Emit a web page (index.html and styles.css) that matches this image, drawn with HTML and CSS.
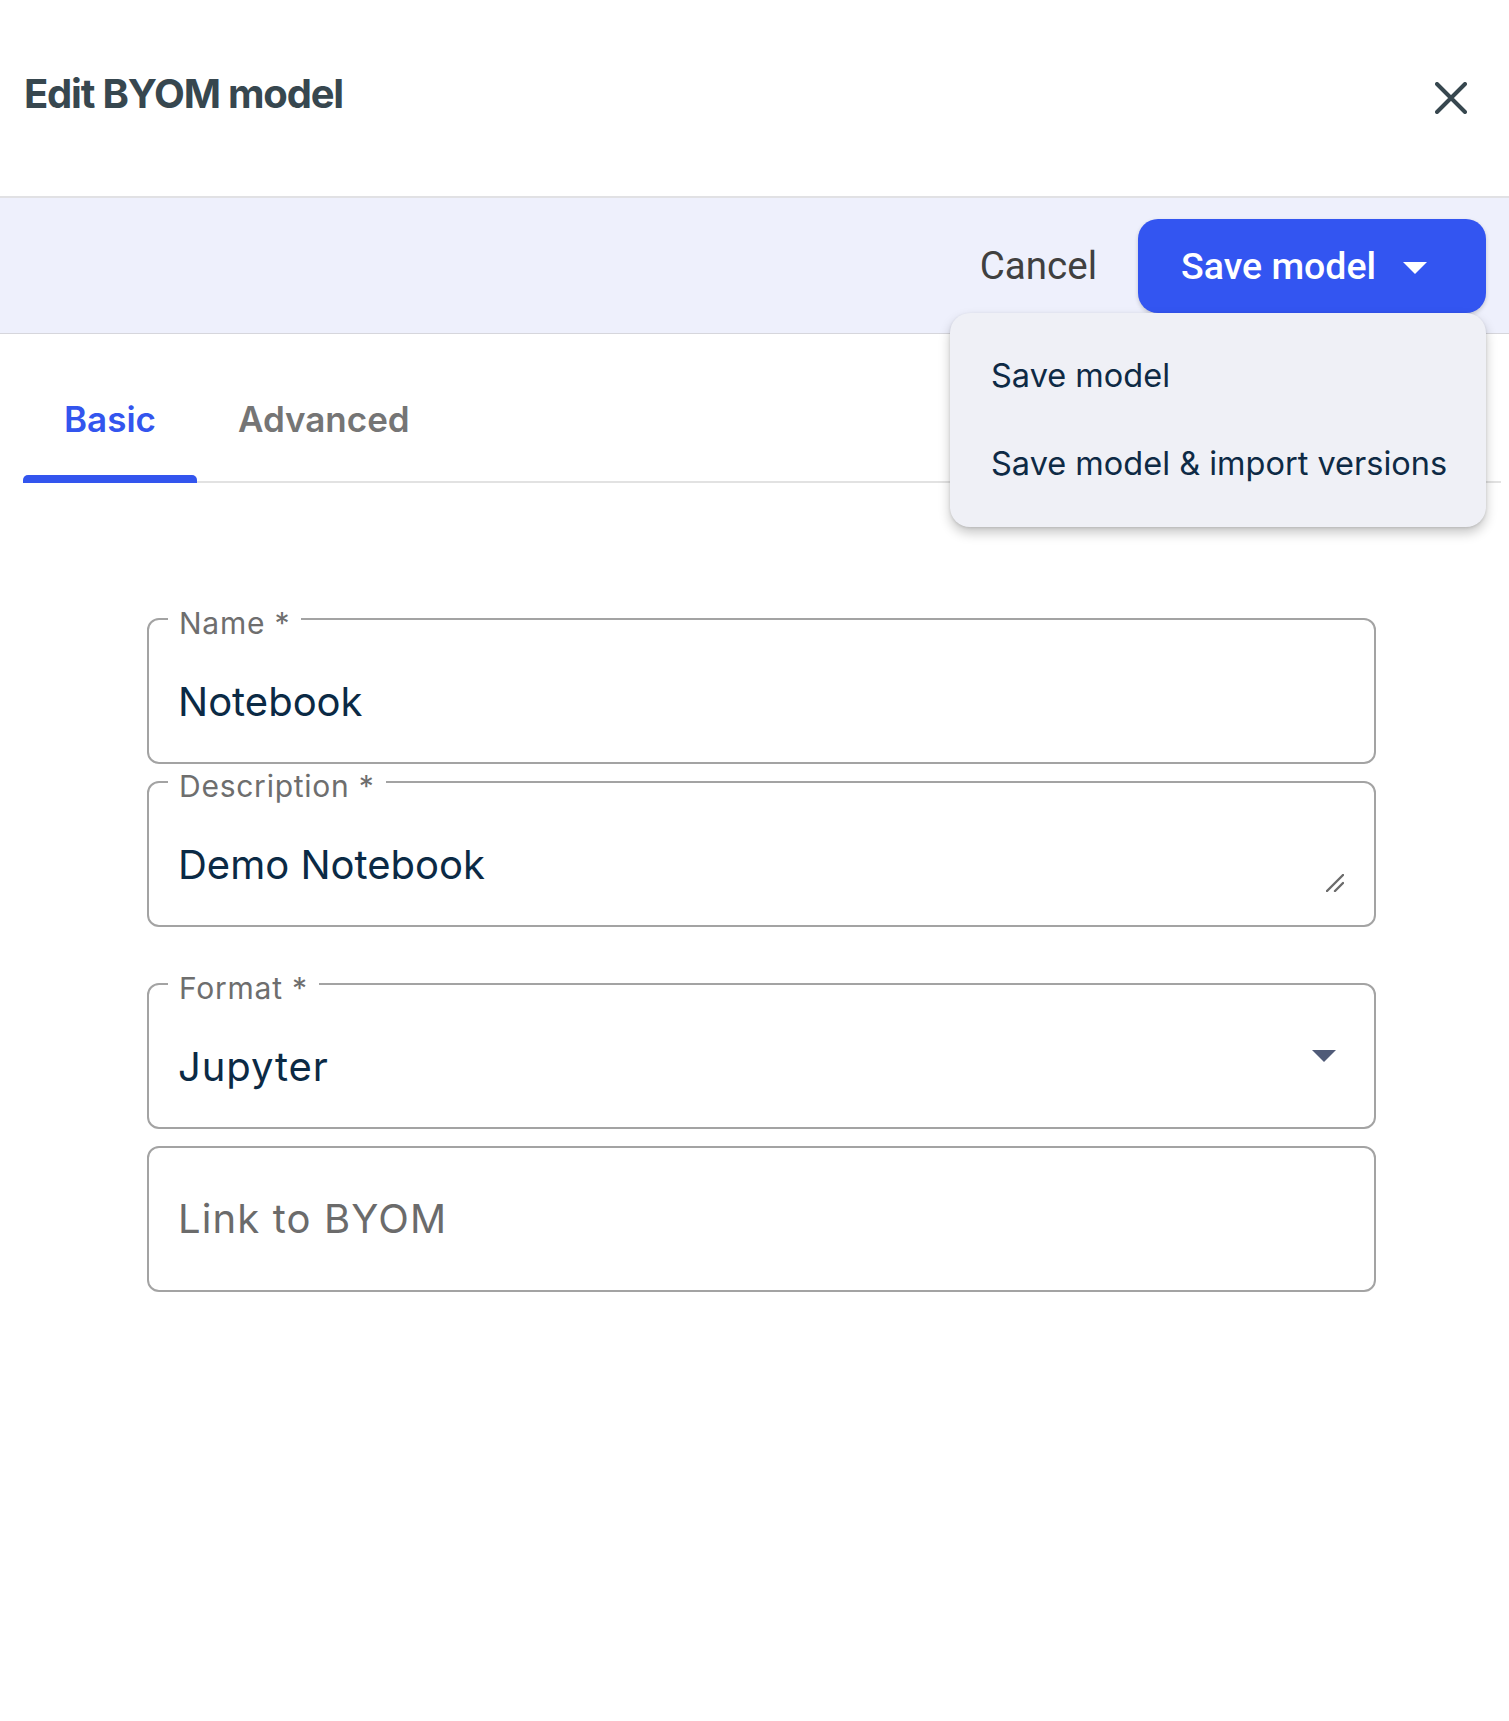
FILE: index.html
```html
<!DOCTYPE html>
<html lang="en">
<head>
<meta charset="utf-8">
<title>Edit BYOM model</title>
<link rel="stylesheet" href="styles.css">
</head>
<body>
<div class="dialog">
  <header class="header">
    <h1 class="title">Edit BYOM model</h1>
    <button class="close" aria-label="Close">
      <svg width="32" height="32" viewBox="0 0 32 32"><path d="M2 2 L30 30 M30 2 L2 30" stroke="#37474f" stroke-width="4" stroke-linecap="round" fill="none"/></svg>
    </button>
  </header>

  <div class="toolbar">
    <button class="cancel">Cancel</button>
    <div class="split">
      <button class="save">
        <span>Save model</span>
        <svg class="save-caret" width="24" height="12" viewBox="0 0 24 12"><path d="M0 0 H24 L12 12 Z" fill="#fff"/></svg>
      </button>
      <ul class="menu">
        <li class="menu-item">Save model</li>
        <li class="menu-item">Save model &amp; import versions</li>
      </ul>
    </div>
  </div>

  <nav class="tabs">
    <div class="tab active">Basic</div>
    <div class="tab">Advanced</div>
  </nav>

  <form class="form">
    <div class="field">
      <span class="field-label">Name *</span>
      <div class="field-value">Notebook</div>
    </div>
    <div class="field field-area">
      <span class="field-label">Description *</span>
      <div class="field-value">Demo Notebook</div>
      <svg class="resize" width="18" height="18" viewBox="0 0 18 18"><path d="M1 17 L17 1 M9 17 L17 9" stroke="#6b6b6b" stroke-width="2.4" stroke-linecap="round" fill="none"/></svg>
    </div>
    <div class="field field-select">
      <span class="field-label">Format *</span>
      <div class="field-value">Jupyter</div>
      <svg class="select-caret" width="24" height="12" viewBox="0 0 24 12"><path d="M0 0 H24 L12 12 Z" fill="#505b78"/></svg>
    </div>
    <div class="field field-plain">
      <div class="field-value placeholder">Link to BYOM</div>
    </div>
  </form>
</div>
</body>
</html>
```

FILE: styles.css
```css
* { box-sizing: border-box; }
html, body { margin: 0; padding: 0; background: #fff; }
body { font-family: Inter, "Noto Sans", sans-serif; width: 1509px; min-height: 1721px; }

.dialog { position: relative; }

.header {
  height: 198px;
  border-bottom: 2px solid #e1e1e4;
  display: flex;
  justify-content: space-between;
  align-items: flex-start;
  padding: 74px 42px 0 24px;
}
.title {
  margin: 0;
  font-size: 40px;
  line-height: 40px;
  font-weight: 700;
  color: #37474f;
  letter-spacing: -0.03em;
}
.close {
  margin-top: 8px;
  padding: 0;
  border: 0;
  background: none;
  width: 32px;
  height: 32px;
  display: block;
}
.close svg { display: block; }

.toolbar {
  height: 136px;
  background: #eef0fc;
  border-bottom: 1px solid #d6d6dc;
  display: flex;
  justify-content: flex-end;
  align-items: center;
  padding-right: 23px;
}
.cancel {
  font-family: Roboto, sans-serif;
  font-size: 38.5px;
  font-weight: 400;
  color: #404040;
  background: none;
  border: 0;
  padding: 0;
  margin-right: 41px;
}
.split { position: relative; }
.save {
  width: 348px;
  height: 94px;
  border: 0;
  border-radius: 20px;
  background: #3355f1;
  color: #fff;
  font-family: Roboto, sans-serif;
  font-size: 37.5px;
  font-weight: 500;
  display: flex;
  align-items: center;
  padding: 0 59px 0 43px;
  justify-content: space-between;
  box-shadow: 0 2px 4px rgba(0,0,0,0.18);
}
.save-caret { display: block; margin-top: 4px; }

.menu {
  position: absolute;
  top: 94px;
  right: 0;
  width: 536px;
  margin: 0;
  padding: 19px 0 19px;
  list-style: none;
  background: #eff0f6;
  border-radius: 20px;
  box-shadow: 0 6px 12px rgba(0,0,0,0.22), 0 1px 3px rgba(0,0,0,0.12);
  z-index: 5;
}
.menu-item {
  height: 88px;
  line-height: 88px;
  padding-left: 41px;
  font-size: 32.5px;
  color: #0e2a45;
  white-space: nowrap;
}

.tabs {
  display: flex;
  margin: 0 8px 0 23px;
  border-bottom: 2px solid #e2e2e2;
  height: 149px;
}
.tab {
  position: relative;
  padding: 67px 41px 0;
  font-size: 35px;
  line-height: 36px;
  font-weight: 600;
  color: #757575;
}
.tab.active { color: #3355ee; }
.tab.active::after {
  content: "";
  position: absolute;
  left: 0;
  right: 0;
  bottom: -2px;
  height: 8px;
  background: #3355ee;
  border-radius: 5px 5px 0 0;
}

.form {
  padding: 135px 133px 0 147px;
  display: flex;
  flex-direction: column;
}
.field {
  position: relative;
  height: 146px;
  border: 2px solid #a3a3a3;
  border-radius: 12px;
  display: flex;
  align-items: flex-start;
  margin-bottom: 17px;
}
.field-area { margin-bottom: 56px; }
.field-label {
  position: absolute;
  top: -12px;
  left: 19px;
  padding: 0 11px;
  background: #fff;
  font-size: 30px;
  line-height: 30px;
  color: #6e6e6e;
  letter-spacing: 0.025em;
}
.field-value {
  flex: 1;
  padding: 62px 0 0 29px;
  font-size: 40px;
  line-height: 40px;
  color: #0b2a45;
}
.field-select .field-value { letter-spacing: 0.023em; }
.field-plain .field-value { padding-top: 51px; }
.placeholder { color: #6b6b6b; letter-spacing: 0.028em; }
.resize {
  align-self: flex-end;
  margin: 0 30px 33px 0;
  display: block;
}
.select-caret {
  align-self: center;
  margin-right: 38px;
  display: block;
}
```
